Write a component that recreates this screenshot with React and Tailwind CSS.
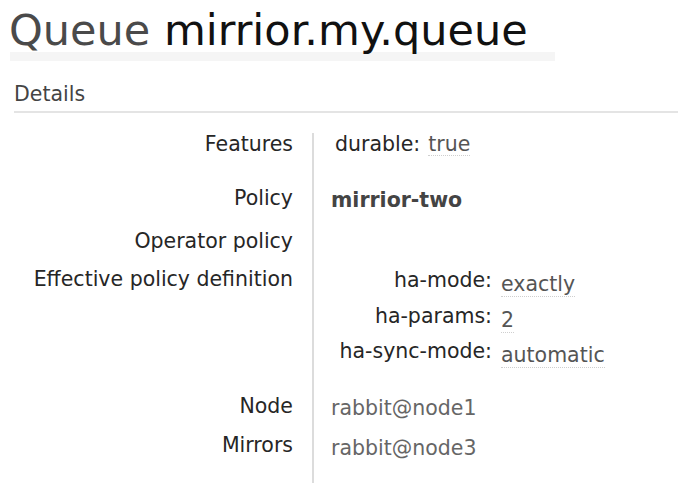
const Row = ({ label, rowClass, labelClass, valueClass, children }) => (
  <div className={`flex ${rowClass}`}>
    <div className={`w-[293px] shrink-0 text-right text-[#262626] ${labelClass}`}>{label}</div>
    <div className={`ml-[19px] flex-1 border-l-2 border-[#dcdcdc] pl-[17px] ${valueClass}`}>
      {children}
    </div>
  </div>
);

const Val = ({ children }) => (
  <span className="align-[-4px] border-b border-dotted border-[#cfcfcf] text-[#555]">{children}</span>
);

const App = () => {
  return (
    <div className="w-[687px] h-[490px] overflow-hidden bg-white font-['DejaVu_Sans',Verdana,sans-serif]">
      {/* Title */}
      <h1 className="ml-[9px] mt-[9px] h-[43px] text-[43px] leading-[43px] whitespace-nowrap text-[#4a4a4a]">
        Queue <span className="text-[#111]">mirrior.my.queue</span>
      </h1>
      <div className="ml-[10px] w-[545px] h-[9px] bg-[#f5f5f5]" />

      {/* Section heading */}
      <div className="ml-[14px] mt-[22px] w-[664px] h-[30px] border-b-2 border-[#e4e4e4] text-[20.5px] leading-[22px] text-[#444]">
        Details
      </div>

      {/* Facts table */}
      <div className="mt-[20px] text-[20.5px] leading-[22px]">
        <Row label="Features" rowClass="h-[53px]" labelClass="pt-0" valueClass="pt-0">
          <div className="flex pl-[4px] gap-[8px]">
            <span className="text-[#262626]">durable:</span>
            <Val>true</Val>
          </div>
        </Row>

        <Row label="Policy" rowClass="h-[43px]" labelClass="pt-[1px]" valueClass="pt-[3px]">
          <span className="font-bold text-[#444]">mirrior-two</span>
        </Row>

        <Row label="Operator policy" rowClass="h-[38px]" labelClass="pt-[1px]" valueClass="pt-[1px]" />

        <Row label="Effective policy definition" rowClass="h-[128px]" labelClass="pt-[1px]" valueClass="pt-[2px]">
          <div className="grid grid-cols-[157px_auto] pl-[4px] text-[#262626]">
            <span className="h-[36px] text-right">ha-mode:</span>
            <span className="pl-[9px]"><Val>exactly</Val></span>
            <span className="h-[35px] text-right">ha-params:</span>
            <span className="pl-[9px]"><Val>2</Val></span>
            <span className="text-right">ha-sync-mode:</span>
            <span className="pl-[9px]"><Val>automatic</Val></span>
          </div>
        </Row>

        <Row label="Node" rowClass="h-[39px]" labelClass="pt-0" valueClass="pt-[2px]">
          <span className="text-[#666]">rabbit@node1</span>
        </Row>

        <Row label="Mirrors" rowClass="h-[49px]" labelClass="pt-0" valueClass="pt-[3px]">
          <span className="text-[#666]">rabbit@node3</span>
        </Row>
      </div>
    </div>
  );
};

export default App;
